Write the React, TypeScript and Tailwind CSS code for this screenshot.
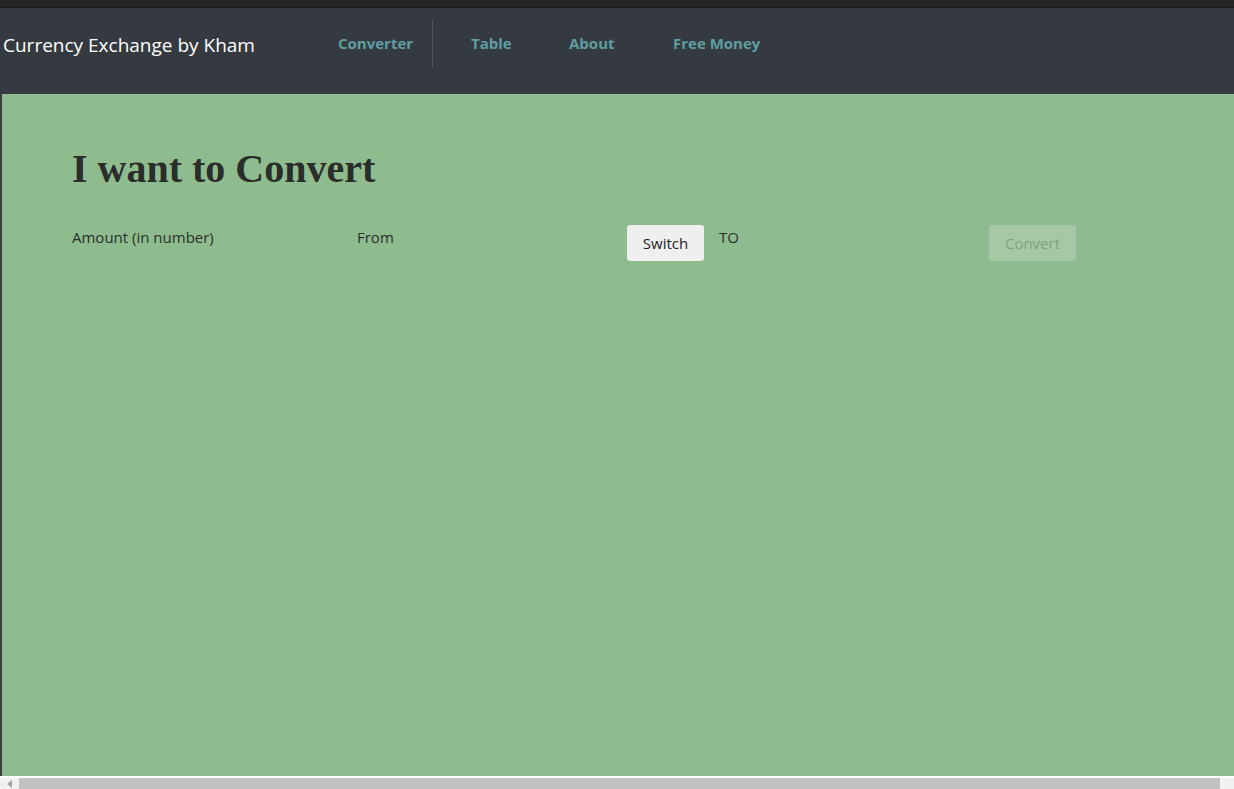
import React from "react";

export default function App() {
  const sans = { fontFamily: '"Open Sans", "Noto Sans", sans-serif' } as React.CSSProperties;
  return (
    <div className="w-[1234px] h-[789px] overflow-hidden flex flex-col bg-[#f1f1f1]" style={sans}>
      <div className="h-[8px] bg-[#262626] border-b border-[#1b1b1b] shrink-0" />
      <nav className="h-[86px] bg-[#343a40] flex items-center pb-[17px] shrink-0">
        <div className="pl-[3px] w-[338px] text-[19px] text-white leading-[28px] pt-[5px]">Currency Exchange by Kham</div>
        <div className="flex items-center text-[15px] font-bold text-[#5f9ea0]">
          <div className="w-[94px] leading-[24px]">Converter</div>
          <div className="w-px h-[48px] bg-[#50565c] mr-[38px]" />
          <div className="w-[98px] leading-[24px]">Table</div>
          <div className="w-[104px] leading-[24px]">About</div>
          <div className="leading-[24px]">Free Money</div>
        </div>
      </nav>
      <div className="flex flex-1 min-h-0">
        <div className="w-[2px] bg-[#3a3d41] shrink-0" />
        <main className="flex-1 bg-[#8fbc8f] pl-[70px] pt-[52px] text-[#2b2f2b]">
          <h1
            className="text-[40px] font-bold leading-[46px] text-[#2a2d2a]"
            style={{ fontFamily: '"Liberation Serif", "Times New Roman", serif' }}
          >
            I want to Convert
          </h1>
          <div className="flex items-start mt-[33px] text-[15px]">
            <div className="w-[285px] leading-[24px]">Amount (in number)</div>
            <div className="w-[270px] leading-[24px]">From</div>
            <button className="w-[77px] h-[36px] rounded-[3px] bg-[#efefef] text-[#222] text-[15px]">Switch</button>
            <div className="ml-[15px] w-[270px] leading-[24px]">TO</div>
            <button className="w-[87px] h-[36px] rounded-[3px] bg-[#a6c8a6] text-[#7ea37e] text-[15px]" disabled>
              Convert
            </button>
          </div>
        </main>
      </div>
      <div className="h-[2px] bg-white shrink-0" />
      <div className="h-[11px] flex items-center bg-[#f1f1f1] shrink-0">
        <div className="w-[19px] h-full flex items-center justify-center">
          <svg width="6" height="8" viewBox="0 0 6 8"><path d="M5 0 L0 4 L5 8 Z" fill="#a3a3a3" /></svg>
        </div>
        <div className="w-[1201px] h-full bg-[#c1c1c1]" />
      </div>
    </div>
  );
}
